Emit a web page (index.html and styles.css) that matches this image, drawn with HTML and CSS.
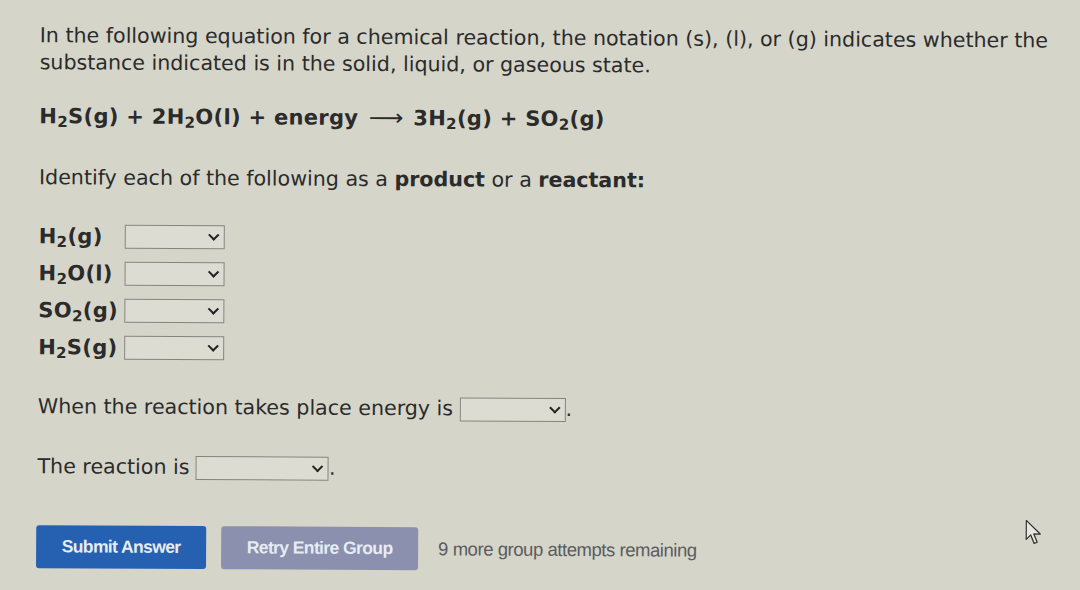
FILE: index.html
```html
<!DOCTYPE html>
<html>
<head>
<meta charset="utf-8">
<link rel="stylesheet" href="styles.css">
</head>
<body>
<div class="page">
  <p class="intro">In the following equation for a chemical reaction, the notation (s), (l), or (g) indicates whether the substance indicated is in the solid, liquid, or gaseous state.</p>
  <p class="eq">H<sub>2</sub>S(g) + 2H<sub>2</sub>O(l) + energy <span class="arrow">&#x27F6;</span> 3H<sub>2</sub>(g) + SO<sub>2</sub>(g)</p>
  <p class="ident">Identify each of the following as a <b>product</b> or a <b>reactant:</b></p>
  <div class="list">
    <div class="row"><span class="sp">H<sub>2</sub>(g)</span><span class="sel"><span class="chev"></span></span></div>
    <div class="row"><span class="sp">H<sub>2</sub>O(l)</span><span class="sel"><span class="chev"></span></span></div>
    <div class="row"><span class="sp">SO<sub>2</sub>(g)</span><span class="sel"><span class="chev"></span></span></div>
    <div class="row"><span class="sp">H<sub>2</sub>S(g)</span><span class="sel"><span class="chev"></span></span></div>
  </div>
  <p class="line l1">When the reaction takes place energy is <span class="sel wide"><span class="chev"></span></span>.</p>
  <p class="line l2">The reaction is <span class="sel wide2"><span class="chev"></span></span>.</p>
  <div class="actions">
    <span class="btn submit">Submit Answer</span>
    <span class="btn retry">Retry Entire Group</span>
    <span class="remain">9 more group attempts remaining</span>
    <svg class="cursor" width="18" height="28" viewBox="0 0 18 28"><path d="M1 1 L1 20 L5.5 15.5 L9 24 L12 22.8 L8.6 14.6 L15 14.6 Z" fill="#e8e8e0" stroke="#333" stroke-width="1.3" stroke-linejoin="round"/></svg>
  </div>
</div>
</body>
</html>
```
FILE: styles.css
```css
html, body { margin: 0; padding: 0; }
body {
  width: 1080px; height: 590px; overflow: hidden;
  background: #d5d5ca;
  font-family: "DejaVu Sans", Verdana, sans-serif;
  color: #2b2b2b;
}
.page { padding: 22px 0 0 40px; transform: rotate(0.3deg); transform-origin: 0 0; }
p { margin: 0; }
.intro { font-size: 20.6px; line-height: 27px; width: 1035px; }
.eq { font-weight: bold; font-size: 21px; margin-top: 27px; letter-spacing: 0.3px; }
sub { font-size: 0.72em; vertical-align: -0.25em; line-height: 0; }
.arrow { font-weight: normal; font-size: 22px; display: inline-block; transform: scaleX(1.1); margin: 0 4px; }
.ident { font-size: 20.6px; margin-top: 37px; }
.ident b { font-weight: bold; }
.list { margin-top: 34px; display: flex; flex-direction: column; gap: 12px; }
.row { display: flex; align-items: center; height: 25px; }
.sp { font-weight: bold; font-size: 21px; width: 86px; letter-spacing: 0.3px; }
.sel {
  display: inline-flex; align-items: center; justify-content: flex-end;
  width: 100px; height: 24px; border: 1px solid #858580; background: #dcdcd3;
  box-sizing: border-box; padding-right: 6px; vertical-align: middle;
}
.chev {
  width: 6px; height: 6px; border-right: 2.2px solid #222; border-bottom: 2.2px solid #222;
  transform: rotate(45deg); margin-top: -4px;
}
.line { font-size: 20.6px; }
.l1 { margin-top: 35px; }
.l2 { margin-top: 35px; }
.sel.wide { width: 106px; }
.sel.wide2 { width: 133px; }
.actions { margin-top: 46px; margin-left: -1px; display: flex; align-items: center; position: relative; width: 1030px; }
.btn {
  font-family: "Liberation Sans Narrow", "Liberation Sans", Arial, sans-serif;
  font-weight: bold; font-size: 17.5px; color: #e6ecf2; letter-spacing: -0.6px;
  height: 43px; display: inline-flex; align-items: center; justify-content: center;
  border-radius: 3px; box-sizing: border-box;
}
.submit { width: 170px; background: #2561b0; }
.retry { width: 197px; background: #8a90ae; margin-left: 15px; }
.remain {
  font-family: "Liberation Sans Narrow", "Liberation Sans", Arial, sans-serif;
  font-size: 18.5px; color: #5c5c60; margin-left: 20px; letter-spacing: -0.45px;
}
.cursor { position: absolute; left: 989px; top: -11px; }
```
